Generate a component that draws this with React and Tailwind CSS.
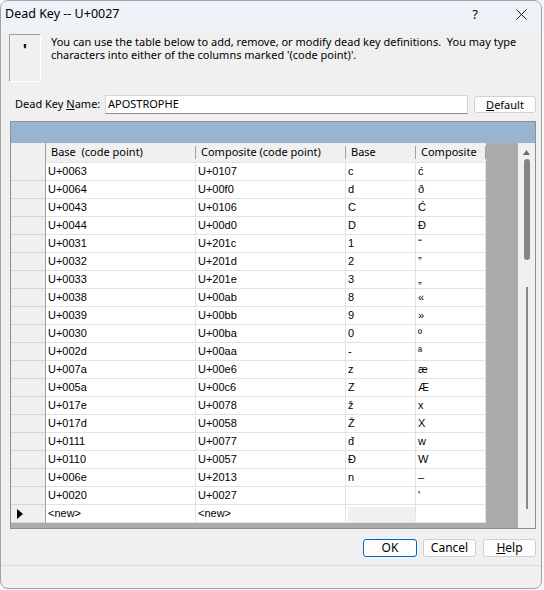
import React from 'react';

const rows = [
  ['U+0063', 'U+0107', 'c', 'ć'],
  ['U+0064', 'U+00f0', 'd', 'ð'],
  ['U+0043', 'U+0106', 'C', 'Ć'],
  ['U+0044', 'U+00d0', 'D', 'Ð'],
  ['U+0031', 'U+201c', '1', '“'],
  ['U+0032', 'U+201d', '2', '”'],
  ['U+0033', 'U+201e', '3', '„'],
  ['U+0038', 'U+00ab', '8', '«'],
  ['U+0039', 'U+00bb', '9', '»'],
  ['U+0030', 'U+00ba', '0', 'º'],
  ['U+002d', 'U+00aa', '-', 'ª'],
  ['U+007a', 'U+00e6', 'z', 'æ'],
  ['U+005a', 'U+00c6', 'Z', 'Æ'],
  ['U+017e', 'U+0078', 'ž', 'x'],
  ['U+017d', 'U+0058', 'Ž', 'X'],
  ['U+0111', 'U+0077', 'đ', 'w'],
  ['U+0110', 'U+0057', 'Đ', 'W'],
  ['U+006e', 'U+2013', 'n', '–'],
  ['U+0020', 'U+0027', '', "'"],
];

const widths = ['w-[150px]', 'w-[150px]', 'w-[70px]', 'w-[70px]'];
const headers = ['Base  (code point)', 'Composite (code point)', 'Base', 'Composite'];

function HeaderCell({ label, w }) {
  return (
    <div className={`${w} shrink-0 flex items-stretch bg-[#f0f0f0] border-b border-[#e3e3e3]`}>
      <div className="flex-1 pl-[5px] flex items-center whitespace-pre font-['Noto_Sans',sans-serif] text-[11px] text-black">
        {label}
      </div>
      <div className="w-px my-[3px] bg-[#a0a0a0]" />
    </div>
  );
}

function DataRow({ cells, isNew }) {
  return (
    <div className="flex h-[18px]">
      <div className="w-[35px] shrink-0 bg-[#f0f0f0] border-r border-r-[#a0a0a0] border-b border-b-[#d4d4d4] flex items-center pl-[6px]">
        {isNew && (
          <svg width="6" height="10" viewBox="0 0 6 10">
            <path d="M0 0 L6 5 L0 10 Z" fill="#000" />
          </svg>
        )}
      </div>
      {cells.map((c, i) => (
        <div
          key={i}
          className={`${widths[i]} shrink-0 bg-white border-r border-b border-[#e3e3e3] flex items-center pl-[2px] font-['Liberation_Sans',Arial,sans-serif] text-[11px] text-black whitespace-pre relative`}
        >
          {isNew && i === 2 ? (
            <div className="absolute left-[2px] right-0 top-[2px] bottom-0 bg-[#f0f0f0]" />
          ) : (
            c
          )}
        </div>
      ))}
    </div>
  );
}

export default function App() {
  const ui = "font-['Noto_Sans',sans-serif]";
  return (
    <div className="w-[544px] h-[590px] bg-[#f7f7f7]">
      <div className={`w-[542px] h-[589px] rounded-[8px] border border-[#a3a3a3] bg-[#f0f0f0] flex flex-col overflow-hidden ${ui} text-[11px] text-black`}>
        {/* Title bar */}
        <div className="h-[29px] shrink-0 bg-[#eef3f9] flex items-start text-[12.5px]">
          <span className="ml-[4px] mt-[5px] leading-[16px]">Dead Key -- U+0027</span>
          <span className="ml-auto mt-[5px] leading-[16px] text-[13px]">?</span>
          <svg className="ml-[38px] mr-[14px] mt-[8px]" width="11" height="11" viewBox="0 0 11 11">
            <path d="M0.5 0.5 L10.5 10.5 M10.5 0.5 L0.5 10.5" stroke="#1a1a1a" strokeWidth="1" />
          </svg>
        </div>

        {/* Description */}
        <div className="flex mt-[4px] ml-[8px]">
          <div className="w-[32px] h-[48px] shrink-0 border border-t-[#a0a0a0] border-l-[#a0a0a0] border-r-white border-b-white flex justify-center">
            <span className="mt-[7px] font-bold text-[16px] leading-[16px]">'</span>
          </div>
          <p className="ml-[10px] mt-[1px] leading-[13px] whitespace-nowrap">
            You can use the table below to add, remove, or modify dead key definitions.&nbsp; You may type
            <br />
            characters into either of the columns marked '(code point)'.
          </p>
        </div>

        {/* Name row */}
        <div className="flex items-center mt-[13px]">
          <label className="w-[104px] pl-[14px] shrink-0 whitespace-nowrap">
            Dead Key <span className="underline">N</span>ame:
          </label>
          <div className="w-[363px] h-[19px] shrink-0 bg-white border border-[#d5d5d5] border-b-[#8a8a8a] flex items-center pl-[2px]">
            APOSTROPHE
          </div>
          <button className="ml-[6px] w-[62px] h-[17px] rounded-[3px] border border-[#d0d0d0] bg-[#fdfdfd] flex items-center justify-center leading-none">
            <span><span className="underline">D</span>efault</span>
          </button>
        </div>

        {/* Grid */}
        <div className="ml-[9px] mt-[7px] w-[526px] h-[408px] shrink-0 border border-[#8f8f8f] flex flex-col">
          <div className="h-[21px] shrink-0 bg-[#99b4d1]" />
          <div className="flex flex-1">
            <div className="w-[507px] bg-[#ababab] flex flex-col">
              <div className="flex h-[20px]">
                <div className="w-[35px] shrink-0 bg-[#f0f0f0] border-r border-[#a0a0a0]" />
                {headers.map((h, i) => (
                  <HeaderCell key={i} label={h} w={widths[i]} />
                ))}
              </div>
              {rows.map((r, i) => (
                <DataRow key={i} cells={r} />
              ))}
              <DataRow cells={['<new>', '<new>', '', '']} isNew />
            </div>
            {/* Scrollbar */}
            <div className="w-[17px] bg-[#f0f0f0] flex flex-col items-center">
              <svg className="mt-[7px]" width="7" height="5" viewBox="0 0 7 5">
                <path d="M0 5 L3.5 0 L7 5 Z" fill="#6b6b6b" />
              </svg>
              <div className="mt-[4px] w-[6px] h-[101px] rounded-full bg-[#858585]" />
              <div className="mt-[27px] w-[2px] h-[222px] bg-[#8a8a8a]" />
            </div>
          </div>
        </div>

        {/* Buttons */}
        <div className="flex justify-end mt-[10px] pr-[5px] text-[12px]">
          <button className="w-[54px] h-[18px] rounded-[3px] border border-[#0067c0] bg-[#fdfdfd] leading-none">OK</button>
          <button className="ml-[6px] w-[53px] h-[18px] rounded-[3px] border border-[#d0d0d0] bg-[#fdfdfd] leading-none">Cancel</button>
          <button className="ml-[7px] w-[53px] h-[18px] rounded-[3px] border border-[#d0d0d0] bg-[#fdfdfd] leading-none">
            <span className="underline">H</span>elp
          </button>
        </div>

        <div className="mt-[8px] border-t border-[#dcdcdc] flex-1" />
      </div>
    </div>
  );
}
